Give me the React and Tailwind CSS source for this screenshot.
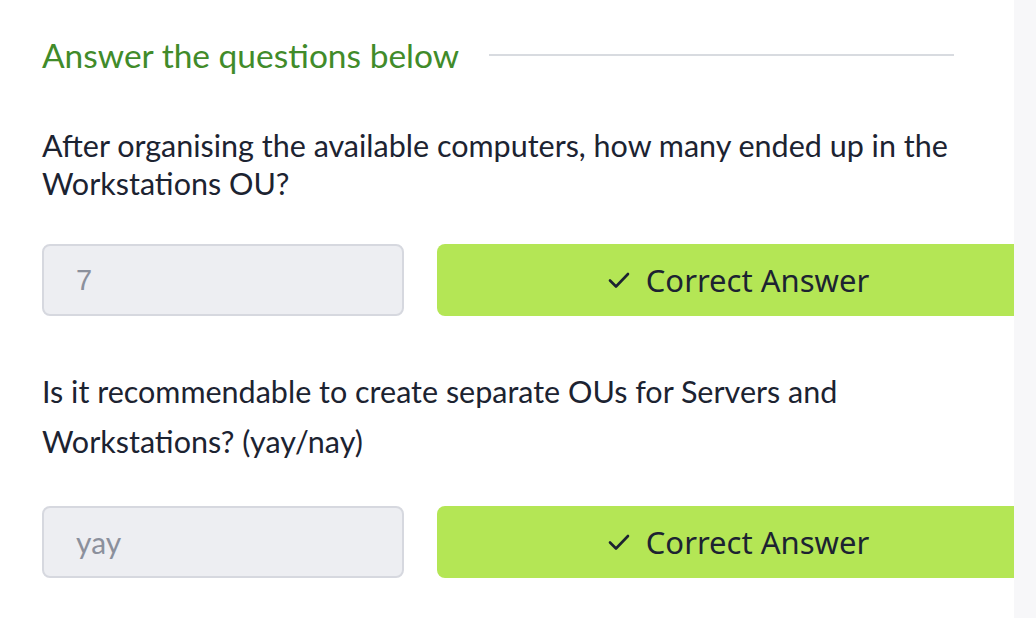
import React from "react";

const questions = [
  {
    text: "After organising the available computers, how many ended up in the Workstations OU?",
    answer: "7",
    wrap: "mt-[49px]",
    leading: "leading-[38px]",
    gap: "mt-[42px]",
    answerFont: "font-['Liberation_Sans',Arial,sans-serif] text-[29px]",
  },
  {
    text: "Is it recommendable to create separate OUs for Servers and Workstations? (yay/nay)",
    answer: "yay",
    wrap: "mt-[50px]",
    leading: "leading-[50px]",
    gap: "mt-[40px]",
    answerFont: "font-['Lato',sans-serif] text-[30px]",
  },
];

const Check = () => (
  <svg width="22" height="18" viewBox="0 0 22 18" fill="none" stroke="currentColor" strokeWidth="2.6" strokeLinecap="round" strokeLinejoin="round">
    <path d="M2 9.5l6 6L20 3" />
  </svg>
);

const App = () => {
  return (
    <div className="flex h-[618px] w-[1036px] overflow-hidden bg-white font-['Lato',sans-serif]">
      <main className="flex-1 pl-[42px] pt-[33px]">
        <div className="flex items-center gap-[30px] pr-[60px]">
          <h3 className="text-[33.5px] leading-[44px] text-[#418b2a]">Answer the questions below</h3>
          <div className="h-[2px] flex-1 bg-[#d8dbe0]" />
        </div>

        {questions.map((q, i) => (
          <section key={i} className={q.wrap}>
            <p className={`max-w-[940px] text-[30.5px] text-[#1c2331] ${q.leading}`}>{q.text}</p>
            <div className={`${q.gap} flex gap-[33px]`}>
              <input
                readOnly
                value={q.answer}
                className={`h-[72px] w-[362px] rounded-[8px] border-2 border-[#d6d8df] bg-[#edeef2] px-[32px] text-[#8b909c] outline-none ${q.answerFont}`}
              />
              <button className="flex h-[72px] flex-1 items-center justify-center gap-[16px] rounded-l-[8px] bg-[#b4e655] pl-[26px] text-[31px] text-[#1c2331] font-['Noto_Sans',sans-serif]">
                <Check />
                Correct Answer
              </button>
            </div>
          </section>
        ))}
      </main>
      <aside className="w-[22px] bg-[#f7f7f9]" />
    </div>
  );
};

export default App;
